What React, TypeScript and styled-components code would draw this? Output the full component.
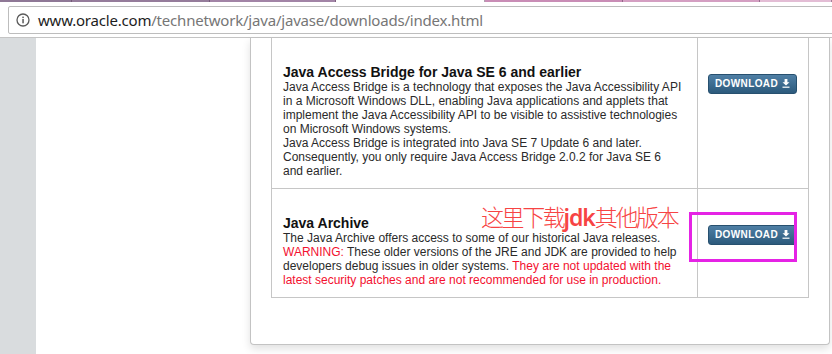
import styled, { createGlobalStyle } from 'styled-components';

const GlobalStyle = createGlobalStyle`
  html, body {
    margin: 0;
    padding: 0;
    background: #ffffff;
    overflow: hidden;
  }
  body {
    font-family: "Liberation Sans", Arial, sans-serif;
  }
`;

const Window = styled.div`
  width: 832px;
  height: 354px;
  display: flex;
  flex-direction: column;
  overflow: hidden;
  background: #ffffff;
`;

const TabStrip = styled.div`
  display: flex;
  height: 2px;
  flex-shrink: 0;
`;

const TabEdge = styled.div<{ $w: number; $color: string }>`
  width: ${(p) => p.$w}px;
  background: ${(p) => p.$color};
  border-right: 1px solid rgba(80, 50, 80, 0.45);
  box-sizing: border-box;
`;

const Toolbar = styled.div`
  height: 36px;
  flex-shrink: 0;
  padding: 4px 0 0 8px;
  box-sizing: border-box;
  border-bottom: 1px solid #c4c4c4;
  background: #ffffff;
  overflow: hidden;
`;

const AddressBar = styled.div`
  height: 28px;
  margin-right: -12px;
  border: 1px solid #bdbdbd;
  border-radius: 2px;
  box-sizing: border-box;
  display: flex;
  align-items: center;
  padding-left: 7px;
  gap: 8px;
`;

const Url = styled.span`
  font-family: "Noto Sans", "Open Sans", sans-serif;
  font-size: 15px;
  letter-spacing: -0.2px;
  color: #767676;
  white-space: nowrap;
`;

const Host = styled.span`
  color: #1d1d1d;
`;

const Viewport = styled.div`
  flex: 1;
  display: flex;
  min-height: 0;
`;

const Sidebar = styled.div`
  width: 36px;
  flex-shrink: 0;
  background: #d9dcde;
`;

const Main = styled.div`
  flex: 1;
  padding-left: 214px;
`;

const Panel = styled.div`
  width: 580px;
  box-sizing: border-box;
  padding: 0 0 46px 20px;
  border: 1px solid #c3c3c3;
  border-top: none;
  border-radius: 0 0 4px 4px;
  box-shadow: 0 4px 8px rgba(0, 0, 0, 0.12);
  background: #ffffff;
`;

const DownloadTable = styled.div`
  width: 538px;
  box-sizing: border-box;
  border: 1px solid #c6c6c6;
  border-top: none;
`;

const Row = styled.div<{ $last?: boolean }>`
  display: grid;
  grid-template-columns: 425px 111px;
  border-bottom: ${(p) => (p.$last ? 'none' : '1px solid #c6c6c6')};
`;

const DescCell = styled.div`
  position: relative;
  padding: 26px 0 10px 11px;
  color: #2a2a2a;
  font-size: 12px;
  line-height: 14px;
  white-space: nowrap;
`;

const ActionCell = styled.div`
  position: relative;
  border-left: 1px solid #c6c6c6;
  padding: 35px 0 0 10px;
`;

const Title = styled.div`
  font-size: 14px;
  line-height: 16px;
  font-weight: bold;
  color: #111111;
`;

const Warn = styled.span`
  color: #f3102f;
`;

const DownloadButton = styled.button`
  width: 89px;
  height: 20px;
  display: inline-flex;
  align-items: center;
  justify-content: center;
  gap: 4px;
  padding: 0;
  border: 1px solid #27506f;
  border-radius: 3px;
  background: linear-gradient(#4f7fa5, #2c5a7c);
  color: #ffffff;
  font-family: "Liberation Sans", Arial, sans-serif;
  font-size: 10px;
  font-weight: bold;
  letter-spacing: 0.4px;
  box-sizing: border-box;
  cursor: pointer;
`;

const Note = styled.span`
  position: absolute;
  left: 209px;
  top: 13px;
  font-family: "Noto Sans CJK SC", "Noto Sans", sans-serif;
  font-size: 23px;
  font-weight: 300;
  line-height: 28px;
  letter-spacing: -2.4px;
  color: #f74444;

  b {
    font-family: "Noto Sans", "Noto Sans CJK SC", sans-serif;
    font-weight: 600;
    letter-spacing: -1px;
  }
`;

const Highlight = styled.div`
  position: absolute;
  left: -9px;
  top: 23px;
  width: 108px;
  height: 50px;
  box-sizing: border-box;
  border: 3px solid #e523e5;
  pointer-events: none;
`;

const tabs = [
  { w: 72, color: '#8f7896' },
  { w: 138, color: '#957c9b' },
  { w: 126, color: '#a284a6' },
  { w: 149, color: '#ffffff' },
  { w: 138, color: '#c98db6' },
  { w: 137, color: '#d49fc2' },
  { w: 72, color: '#e3bdd5' },
];

const InfoIcon = () => (
  <svg width="14" height="14" viewBox="0 0 14 14">
    <circle cx="7" cy="7" r="6" fill="none" stroke="#5a5a5a" strokeWidth="1.3" />
    <rect x="6.3" y="6" width="1.5" height="4.3" fill="#5a5a5a" />
    <rect x="6.3" y="3.6" width="1.5" height="1.5" fill="#5a5a5a" />
  </svg>
);

const ArrowIcon = () => (
  <svg width="8" height="9" viewBox="0 0 8 9">
    <path d="M2.6 0h2.8v3.2h2.1L4 6.6 0.5 3.2h2.1z" fill="#ffffff" />
    <rect x="0.5" y="7.6" width="7" height="1.2" fill="#ffffff" />
  </svg>
);

const Download = () => (
  <DownloadButton>
    DOWNLOAD
    <ArrowIcon />
  </DownloadButton>
);

const App = () => (
  <Window>
    <GlobalStyle />
    <TabStrip>
      {tabs.map((t, i) => (
        <TabEdge key={i} $w={t.w} $color={t.color} />
      ))}
    </TabStrip>
    <Toolbar>
      <AddressBar>
        <InfoIcon />
        <Url>
          <Host>www.oracle.com</Host>/technetwork/java/javase/downloads/index.html
        </Url>
      </AddressBar>
    </Toolbar>
    <Viewport>
      <Sidebar />
      <Main>
        <Panel>
          <DownloadTable>
            <Row>
              <DescCell>
                <Title>Java Access Bridge for Java SE 6 and earlier</Title>
                Java Access Bridge is a technology that exposes the Java Accessibility API
                <br />
                in a Microsoft Windows DLL, enabling Java applications and applets that
                <br />
                implement the Java Accessibility API to be visible to assistive technologies
                <br />
                on Microsoft Windows systems.
                <br />
                Java Access Bridge is integrated into Java SE 7 Update 6 and later.
                <br />
                Consequently, you only require Java Access Bridge 2.0.2 for Java SE 6
                <br />
                and earlier.
              </DescCell>
              <ActionCell>
                <Download />
              </ActionCell>
            </Row>
            <Row $last>
              <DescCell>
                <Note>
                  这里下载<b>jdk</b>其他版本
                </Note>
                <Title>Java Archive</Title>
                The Java Archive offers access to some of our historical Java releases.
                <br />
                <Warn>WARNING:</Warn> These older versions of the JRE and JDK are provided to help
                <br />
                developers debug issues in older systems. <Warn>They are not updated with the</Warn>
                <br />
                <Warn>latest security patches and are not recommended for use in production.</Warn>
              </DescCell>
              <ActionCell>
                <Highlight />
                <Download />
              </ActionCell>
            </Row>
          </DownloadTable>
        </Panel>
      </Main>
    </Viewport>
  </Window>
);

export default App;
